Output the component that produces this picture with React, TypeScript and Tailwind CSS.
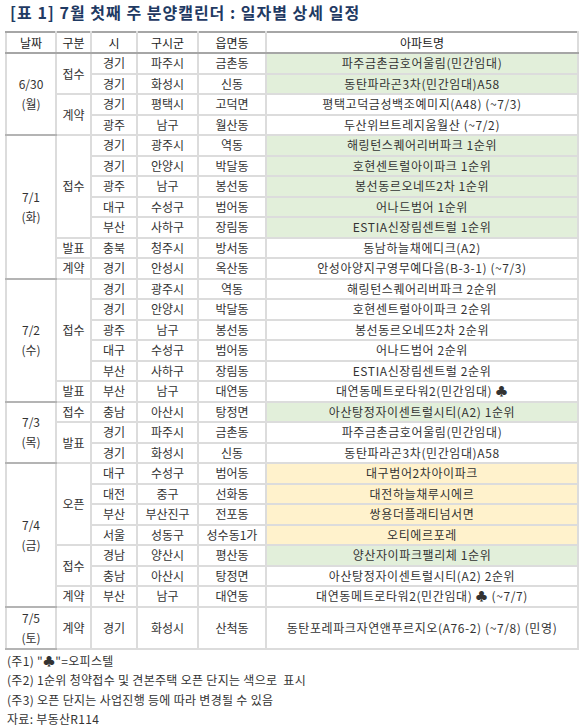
type Row = [string, string, string, string, string?];
type Sub = { type: string; rows: Row[] };
type Group = { date: string; day: string; subs: Sub[]; tall?: boolean };

const groups: Group[] = [
  {
    date: "6/30",
    day: "(월)",
    subs: [
      {
        type: "접수",
        rows: [
          ["경기", "파주시", "금촌동", "파주금촌금호어울림(민간임대)", "g"],
          ["경기", "화성시", "신동", "동탄파라곤3차(민간임대)A58", "g"],
        ],
      },
      {
        type: "계약",
        rows: [
          ["경기", "평택시", "고덕면", "평택고덕금성백조예미지(A48) (~7/3)"],
          ["광주", "남구", "월산동", "두산위브트레지움월산 (~7/2)"],
        ],
      },
    ],
  },
  {
    date: "7/1",
    day: "(화)",
    subs: [
      {
        type: "접수",
        rows: [
          ["경기", "광주시", "역동", "해링턴스퀘어리버파크 1순위", "g"],
          ["경기", "안양시", "박달동", "호현센트럴아이파크 1순위", "g"],
          ["광주", "남구", "봉선동", "봉선동르오네뜨2차 1순위", "g"],
          ["대구", "수성구", "범어동", "어나드범어 1순위", "g"],
          ["부산", "사하구", "장림동", "ESTIA신장림센트럴 1순위", "g"],
        ],
      },
      { type: "발표", rows: [["충북", "청주시", "방서동", "동남하늘채에디크(A2)"]] },
      { type: "계약", rows: [["경기", "안성시", "옥산동", "안성아양지구영무예다음(B-3-1) (~7/3)"]] },
    ],
  },
  {
    date: "7/2",
    day: "(수)",
    subs: [
      {
        type: "접수",
        rows: [
          ["경기", "광주시", "역동", "해링턴스퀘어리버파크 2순위"],
          ["경기", "안양시", "박달동", "호현센트럴아이파크 2순위"],
          ["광주", "남구", "봉선동", "봉선동르오네뜨2차 2순위"],
          ["대구", "수성구", "범어동", "어나드범어 2순위"],
          ["부산", "사하구", "장림동", "ESTIA신장림센트럴 2순위"],
        ],
      },
      { type: "발표", rows: [["부산", "남구", "대연동", "대연동메트로타워2(민간임대) ♣"]] },
    ],
  },
  {
    date: "7/3",
    day: "(목)",
    subs: [
      { type: "접수", rows: [["충남", "아산시", "탕정면", "아산탕정자이센트럴시티(A2) 1순위", "g"]] },
      {
        type: "발표",
        rows: [
          ["경기", "파주시", "금촌동", "파주금촌금호어울림(민간임대)"],
          ["경기", "화성시", "신동", "동탄파라곤3차(민간임대)A58"],
        ],
      },
    ],
  },
  {
    date: "7/4",
    day: "(금)",
    subs: [
      {
        type: "오픈",
        rows: [
          ["대구", "수성구", "범어동", "대구범어2차아이파크", "y"],
          ["대전", "중구", "선화동", "대전하늘채루시에르", "y"],
          ["부산", "부산진구", "전포동", "쌍용더플래티넘서면", "y"],
          ["서울", "성동구", "성수동1가", "오티에르포레", "y"],
        ],
      },
      {
        type: "접수",
        rows: [
          ["경남", "양산시", "평산동", "양산자이파크팰리체 1순위", "g"],
          ["충남", "아산시", "탕정면", "아산탕정자이센트럴시티(A2) 2순위"],
        ],
      },
      { type: "계약", rows: [["부산", "남구", "대연동", "대연동메트로타워2(민간임대) ♣ (~7/7)"]] },
    ],
  },
  {
    date: "7/5",
    day: "(토)",
    tall: true,
    subs: [
      { type: "계약", rows: [["경기", "화성시", "산척동", "동탄포레파크자연앤푸르지오(A76-2) (~7/8) (민영)"]] },
    ],
  },
];

const cell = "border-2 border-[#dcdcdc] text-center p-0 leading-[16px] whitespace-nowrap";

function fill(c?: string) {
  if (c === "g") return "bg-[#e2efda]";
  if (c === "y") return "bg-[#fff2cc]";
  return "bg-white";
}

export default function App() {
  return (
    <div
      className="w-[580px] bg-white text-[#333333] text-[12px]"
      style={{ fontFamily: '"Malgun Gothic", "Noto Sans CJK KR", "Noto Sans", sans-serif' }}
    >
      <h1 className="h-[31px] pl-[10px] pt-[1px] text-[16px] font-bold leading-[22px] tracking-[1px] text-[#1f3a63]">
        [표 1] 7월 첫째 주 분양캘린더 : 일자별 상세 일정
      </h1>

      <table className="ml-[5px] w-[574px] table-fixed border-collapse">
        <colgroup>
          <col className="w-[50px]" />
          <col className="w-[35px]" />
          <col className="w-[46px]" />
          <col className="w-[61px]" />
          <col className="w-[68px]" />
          <col />
        </colgroup>
        <thead>
          <tr className="h-[21px]">
            {["날짜", "구분", "시", "구시군", "읍면동", "아파트명"].map((h) => (
              <th
                key={h}
                className={`${cell} border-t-2 border-t-[#a6a6a6] border-b-[#a6a6a6] font-normal text-[#222]`}
              >
                {h}
              </th>
            ))}
          </tr>
        </thead>
        <tbody>
          {groups.map((g) => {
            const total = g.subs.reduce((n, s) => n + s.rows.length, 0);
            return g.subs.map((s, si) =>
              s.rows.map((r, ri) => {
                const first = si === 0 && ri === 0;
                const top = first ? "border-t-[#b4b4b4]" : "";
                return (
                  <tr key={g.date + s.type + ri} className={g.tall ? "h-[42px]" : "h-[20.5px]"}>
                    {first && (
                      <td rowSpan={total} className={`${cell} ${top} border-b-[#b4b4b4]`}>
                        <div className="leading-[20px]">{g.date}</div>
                        <div className="leading-[20px]">{g.day}</div>
                      </td>
                    )}
                    {ri === 0 && (
                      <td rowSpan={s.rows.length} className={`${cell} ${top}`}>
                        {s.type}
                      </td>
                    )}
                    <td className={`${cell} ${top}`}>{r[0]}</td>
                    <td className={`${cell} ${top}`}>{r[1]}</td>
                    <td className={`${cell} ${top}`}>{r[2]}</td>
                    <td className={`${cell} ${top} ${fill(r[4])} tracking-[0.6px]`}>{r[3]}</td>
                  </tr>
                );
              })
            );
          })}
        </tbody>
      </table>

      <div className="mt-[1px] pl-[7px] leading-[19.5px] tracking-[0.3px]">
        <p>(주1) "♣"=오피스텔</p>
        <p>(주2) 1순위 청약접수 및 견본주택 오픈 단지는 색으로&nbsp;&nbsp;표시</p>
        <p>(주3) 오픈 단지는 사업진행 등에 따라 변경될 수 있음</p>
        <p>자료: 부동산R114</p>
      </div>
    </div>
  );
}
